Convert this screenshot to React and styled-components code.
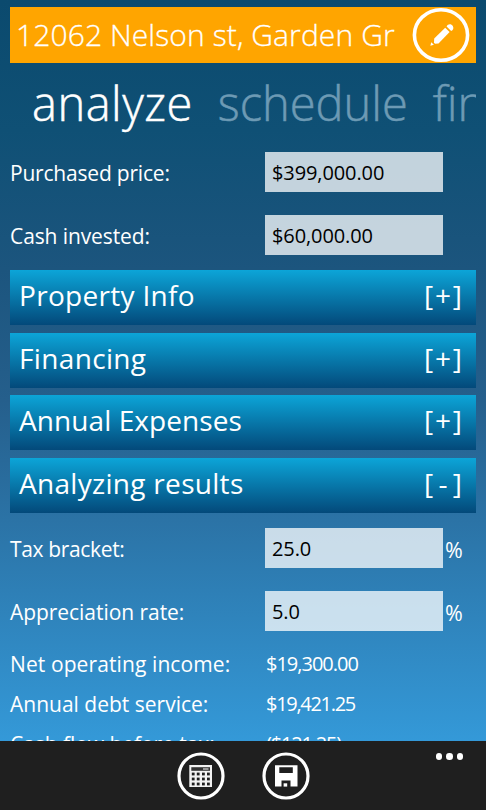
import React from "react";
import styled, { createGlobalStyle } from "styled-components";

const expanders = [
  { title: "Property Info", sign: "+", space: 0.3 },
  { title: "Financing", sign: "+", space: 0.35 },
  { title: "Annual Expenses", sign: "+", space: 0.08 },
  { title: "Analyzing results", sign: "-", space: 0.3 },
];

const results = [
  { label: "Net operating income:", value: "$19,300.00", space: 0.1, tight: -1 },
  { label: "Annual debt service:", value: "$19,421.25", space: 0, tight: -1.3 },
  { label: "Cash flow before tax:", value: "($121.25)", space: -0.05, tight: -1.2 },
];

const PencilIcon = () => (
  <svg width="58" height="56" viewBox="0 0 58 56">
    <ellipse cx="29" cy="28" rx="26.6" ry="25.2" fill="none" stroke="#fff" strokeWidth="3.6" />
    <g fill="#fff">
      <path d="M22.2 31.6 33.2 20.7l4.4 4.4L26.5 36.5l-3.6.2-.9-1.4z" />
      <path d="M34.6 19.6c1-2.7 4.6-3.1 6.200-.7 1.200 1.900.4 4.100-1.700 5.200z" />
      <path d="m18.400 38.700.8-3.500 2.700 2.500z" />
    </g>
  </svg>
);

const CalculatorIcon = () => (
  <svg width="48" height="48" viewBox="0 0 48 48">
    <circle cx="24" cy="24" r="22" fill="none" stroke="#fff" strokeWidth="3.2" />
    <rect x="12.3" y="13" width="22.7" height="22" fill="#f2f2f2" />
    <rect x="14.3" y="15.2" width="18.7" height="3.6" fill="#333" />
    <rect x="26" y="16" width="5.500" height="2" fill="#999" />
    {[20.6, 25.6, 30.6].map((y) =>
      [14.8, 19.8, 25, 30].map((x) => (
        <rect key={`${x}-${y}`} x={x} y={y} width="2.800" height="2.800" fill="#1f1f1f" />
      ))
    )}
  </svg>
);

const SaveIcon = () => (
  <svg width="48" height="48" viewBox="0 0 48 48">
    <circle cx="24" cy="24" r="22" fill="none" stroke="#fff" strokeWidth="3.2" />
    <path
      fill="#fff"
      fillRule="evenodd"
      d="M13 13.300h22.500v21.300h-7v-6.100h-9v6.100h-6.500zM17.300 15.300v5.700h13.500v-5.700z"
    />
    <rect x="21.600" y="31.300" width="3.600" height="3.300" fill="#fff" />
  </svg>
);

const Field = ({ label, value, unit, space }) => (
  <FieldRow>
    <FieldLabel $space={space}>{label}</FieldLabel>
    <Input defaultValue={value} />
    {unit && <Unit>{unit}</Unit>}
  </FieldRow>
);

const App = () => {
  return (
    <Phone>
      <GlobalStyle />
      <Banner>
        <Address>12062 Nelson st, Garden Gr</Address>
        <PencilIcon />
      </Banner>
      <Pivot>
        <PivotItem $active>analyze</PivotItem>
        <PivotItem>schedule</PivotItem>
        <PivotItem>financing</PivotItem>
      </Pivot>
      <Content>
        <Field label="Purchased price:" value="$399,000.00" space={-0.2} />
        <Field label="Cash invested:" value="$60,000.00" space={-0.1} />
        <Expanders>
          {expanders.map(({ title, sign, space }) => (
            <Expander key={title}>
              <Title $space={space}>{title}</Title>
              <Toggle>
                <span>[</span>
                <span>{sign}</span>
                <span>]</span>
              </Toggle>
            </Expander>
          ))}
        </Expanders>
        <Field label="Tax bracket:" value="25.0" unit="%" space={-0.35} />
        <Field label="Appreciation rate:" value="5.0" unit="%" space={-0.05} />
        <Results>
          {results.map(({ label, value, space, tight }) => (
            <ResultRow key={label}>
              <Label $space={space}>{label}</Label>
              <Value $space={tight}>{value}</Value>
            </ResultRow>
          ))}
        </Results>
      </Content>
      <AppBar>
        <Actions>
          <CalculatorIcon />
          <SaveIcon />
        </Actions>
        <More>
          <Dot />
          <Dot />
          <Dot />
        </More>
      </AppBar>
    </Phone>
  );
};

export default App;

const GlobalStyle = createGlobalStyle`
  body {
    margin: 0;
  }
  * {
    box-sizing: border-box;
  }
`;

const Phone = styled.div`
  display: flex;
  flex-direction: column;
  width: 486px;
  height: 810px;
  overflow: hidden;
  color: #fff;
  font-family: "Open Sans", "Noto Sans", sans-serif;
  background: linear-gradient(#0b4a6e 0, #0f5075 130px, #1c557e 270px, #255f8c 400px, #2b73a6 520px, #3499d8 741px);
`;

const Banner = styled.header`
  display: flex;
  align-items: center;
  justify-content: space-between;
  flex: none;
  height: 56px;
  margin: 7px 10px 0;
  padding: 0 6px;
  background: #ffa500;
`;

const Address = styled.div`
  font-size: 30px;
  font-weight: 300;
  line-height: 56px;
  letter-spacing: 0.1px;
  white-space: nowrap;
  -webkit-text-stroke: 0.3px currentColor;
`;

const Pivot = styled.nav`
  display: flex;
  flex: none;
  gap: 25px;
  height: 89px;
  margin-right: 10px;
  padding: 8px 0 0 32px;
  overflow: hidden;
`;

const PivotItem = styled.div`
  flex: none;
  font-size: 47px;
  font-weight: 300;
  line-height: 64px;
  letter-spacing: ${({ $active }) => ($active ? "0.5px" : "0")};
  color: ${({ $active }) => ($active ? "#fff" : "#6d9ab4")};
  -webkit-text-stroke: 0.5px currentColor;
`;

const Content = styled.main`
  flex: 1;
  min-height: 0;
  padding: 0 10px;
  overflow: hidden;
`;

const FieldRow = styled.div`
  display: grid;
  grid-template-columns: 255px 178px auto;
  grid-template-rows: 40px;
  align-items: start;
  height: 40px;
  margin-bottom: 23px;
`;

const Label = styled.label`
  font-size: 21px;
  line-height: 40px;
  white-space: nowrap;
  letter-spacing: ${({ $space }) => $space}px;
`;

const FieldLabel = styled(Label)`
  line-height: 43px;
`;

const Input = styled.input`
  width: 178px;
  height: 40px;
  padding: 1px 7px 0;
  border: 0;
  border-radius: 0;
  font: inherit;
  font-size: 20px;
  letter-spacing: -0.1px;
  color: #000;
  background: rgba(255, 255, 255, 0.75);
`;

const Unit = styled.span`
  padding-left: 2px;
  font-size: 21.5px;
  line-height: 43px;
`;

const Expanders = styled.div`
  display: flex;
  flex-direction: column;
  gap: 7.6px;
  margin: -8px 0 15px;
`;

const Expander = styled.div`
  display: flex;
  justify-content: space-between;
  height: 55px;
  padding: 0 14px 0 9px;
  background: linear-gradient(#0ca5d8, #03497a);
  font-size: 28px;
  line-height: 50px;
`;

const Title = styled.span`
  letter-spacing: ${({ $space }) => $space}px;
`;

const Toggle = styled.span`
  display: flex;
  justify-content: space-between;
  width: 38px;
`;

const Results = styled.div`
  margin-top: -10px;
`;

const ResultRow = styled.div`
  display: grid;
  grid-template-columns: 256px auto;
  height: 40px;
`;

const Value = styled.span`
  font-size: 20px;
  line-height: 40px;
  letter-spacing: ${({ $space }) => $space}px;
`;

const AppBar = styled.footer`
  display: grid;
  grid-template-columns: 1fr auto 1fr;
  align-items: start;
  flex: none;
  height: 69px;
  padding-top: 11px;
  background: #1f1f1f;
`;

const Actions = styled.div`
  display: flex;
  grid-column: 2;
  gap: 37px;
`;

const More = styled.div`
  display: flex;
  justify-content: flex-end;
  gap: 4px;
  padding: 1px 23px 0 0;
`;

const Dot = styled.span`
  width: 6.5px;
  height: 6.5px;
  border-radius: 50%;
  background: #fff;
`;
